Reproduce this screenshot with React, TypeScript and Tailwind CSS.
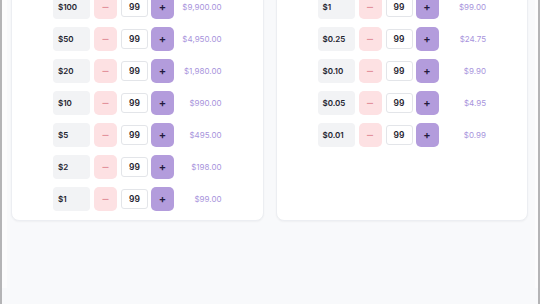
import React from "react"

type Row = { label: string; count: number; total: string }

const left: Row[] = [
  { label: "$100", count: 99, total: "$9,900.00" },
  { label: "$50", count: 99, total: "$4,950.00" },
  { label: "$20", count: 99, total: "$1,980.00" },
  { label: "$10", count: 99, total: "$990.00" },
  { label: "$5", count: 99, total: "$495.00" },
  { label: "$2", count: 99, total: "$198.00" },
  { label: "$1", count: 99, total: "$99.00" },
]

const right: Row[] = [
  { label: "$1", count: 99, total: "$99.00" },
  { label: "$0.25", count: 99, total: "$24.75" },
  { label: "$0.10", count: 99, total: "$9.90" },
  { label: "$0.05", count: 99, total: "$4.95" },
  { label: "$0.01", count: 99, total: "$0.99" },
]

function CountRow({ row }: { row: Row }) {
  return (
    <div className="flex items-center h-6">
      {/* denomination */}
      <div className="w-[37px] h-6 rounded-[4px] bg-[#f2f3f5] flex items-center pl-[5px] text-[8px] font-semibold text-[#1f2430]">
        {row.label}
      </div>
      <button className="ml-[4px] w-[23px] h-6 rounded-[5px] bg-[#fde1e3] flex items-center justify-center text-[12px] font-medium text-[#e3939d]">
        –
      </button>
      <div className="ml-[4px] w-[27px] h-5 rounded-[3px] border border-[#e3e5e9] bg-white flex items-center justify-center text-[8.5px] font-semibold text-[#1f2430]">
        {row.count}
      </div>
      <button className="ml-[3px] w-[23px] h-6 rounded-[5px] bg-[#b39cdc] flex items-center justify-center text-[11px] font-semibold text-[#231a3d]">
        +
      </button>
      <div className="flex-1 text-right pr-[1px] text-[8px] text-[#a793dc]">{row.total}</div>
    </div>
  )
}

function Card({ rows }: { rows: Row[] }) {
  return (
    <div className="bg-white rounded-lg border border-[#eceef2] shadow-[0_1px_2px_rgba(0,0,0,0.04)] pl-[41px] pr-[40px] pt-[10px] pb-[9px]">
      <div className="flex flex-col gap-2">
        {rows.map((r, i) => (
          <CountRow key={i} row={r} />
        ))}
      </div>
    </div>
  )
}

export default function App() {
  return (
    <div
      className="h-[304px] overflow-hidden bg-[#f8f9fb] border-x-2 border-[#b4b4b6]"
      style={{ fontFamily: "Inter, 'Noto Sans', sans-serif" }}
    >
      <div className="h-full border-l-[5px] border-r-[3px] border-[#fcfcfd]">
        <div className="-mt-[16px] grid grid-cols-2 gap-3 pl-[4px] pr-[7px]">
          <Card rows={left} />
          <Card rows={right} />
        </div>
      </div>
    </div>
  )
}
